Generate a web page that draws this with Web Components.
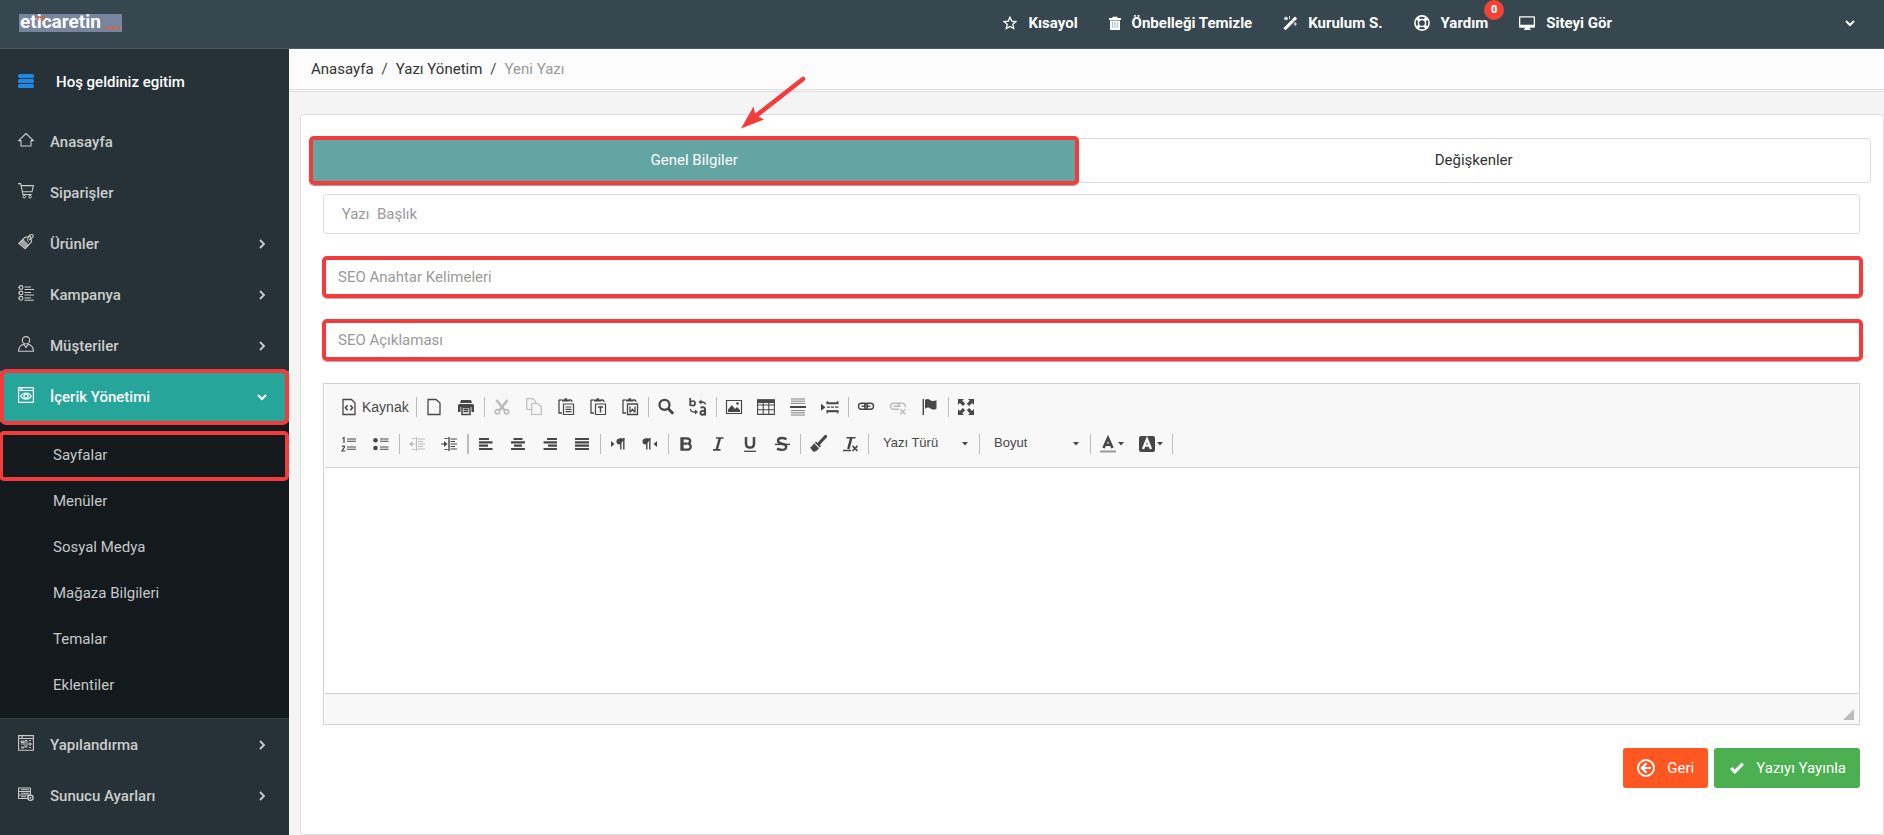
<!DOCTYPE html>
<html lang="tr">
<head>
<meta charset="utf-8">
<title>Yeni Yazı</title>
<style>
  html, body { margin: 0; }
  body {
    font: 15px/24px Roboto, "Open Sans", sans-serif;
    color: #333;
    background: #f4f4f4;
    --mark: #f43b3b;
  }
</style>
</head>
<body>
<admin-shell>
  <top-bar slot="top">
    <top-link icon="star" href="#kisayol">Kısayol</top-link>
    <top-link icon="trash" href="#onbellek">Önbelleği Temizle</top-link>
    <top-link icon="wand" href="#kurulum">Kurulum S.</top-link>
    <top-link icon="ring" href="#yardim" badge="0">Yardım</top-link>
    <top-link icon="screen" href="#site">Siteyi Gör</top-link>
  </top-bar>

  <side-menu slot="side" user="Hoş geldiniz egitim">
    <side-item icon="home">Anasayfa</side-item>
    <side-item icon="cart">Siparişler</side-item>
    <side-item icon="tag" arrow="right">Ürünler</side-item>
    <side-item icon="list" arrow="right">Kampanya</side-item>
    <side-item icon="user" arrow="right">Müşteriler</side-item>
    <side-item icon="eye" arrow="down" active>İçerik Yönetimi</side-item>
    <side-group>
      <sub-item marked>Sayfalar</sub-item>
      <sub-item>Menüler</sub-item>
      <sub-item>Sosyal Medya</sub-item>
      <sub-item>Mağaza Bilgileri</sub-item>
      <sub-item>Temalar</sub-item>
      <sub-item>Eklentiler</sub-item>
    </side-group>
    <side-item icon="config" arrow="right">Yapılandırma</side-item>
    <side-item icon="server" arrow="right">Sunucu Ayarları</side-item>
  </side-menu>

  <crumb-bar></crumb-bar>
  <form-panel>
    <tab-bar slot="tabs"></tab-bar>
    <text-field label=" Yazı  Başlık"></text-field>
    <text-field label="SEO Anahtar Kelimeleri" marked></text-field>
    <text-field label="SEO Açıklaması" marked></text-field>
    <rich-editor></rich-editor>
    <action-button slot="actions" kind="back" icon="back">Geri</action-button>
    <action-button slot="actions" kind="save" icon="check">Yazıyı Yayınla</action-button>
  </form-panel>
</admin-shell>

<script>
const ICONS = {
  star: ['0 0 14 14', '<path d="M7 1.2l1.75 3.9 4.2.45-3.15 2.8.9 4.15L7 10.4l-3.7 2.1.9-4.15L1.05 5.55l4.2-.45z" fill="none" stroke="currentColor" stroke-width="1.3"/>'],
  trash: ['0 0 12 14', '<path d="M0 2h3.5V.8h5V2H12v2H0zM1 4.5h10V14H1z" fill="currentColor"/><path d="M3.7 6v6M6 6v6M8.3 6v6" stroke="#9db8cd" stroke-width="1"/>'],
  wand: ['0 0 14 14', '<path d="M1.5 13.3L13 1.6" stroke="currentColor" stroke-width="3"/><path d="M9.3 4.4l1 1" stroke="#37474f" stroke-width="1"/><path d="M3 .5v4M1 2.5h4M6.5 0v3M12.2 6v4M10.5 8H14M1.5 1l3 3M4.500 1l-3 3" stroke="currentColor" stroke-width=".8"/>'],
  ring: ['0 0 16 16', '<circle cx="8" cy="8" r="7.1" fill="none" stroke="currentColor" stroke-width="1.6"/><circle cx="8" cy="8" r="3.6" fill="none" stroke="currentColor" stroke-width="1.5"/><path d="M2.7 2.7l3 3M13.3 2.7l-3 3M2.7 13.3l3-3M13.3 13.3l-3-3" stroke="currentColor" stroke-width="3.2"/>'],
  screen: ['0 0 16 14', '<path d="M1 .2h14a1 1 0 011 1v9.6a1 1 0 01-1 1h-4.500l.5 1.300h.6V14H5v-.9h.6l.4-1.300H1a1 1 0 01-1-1V1.200a1 1 0 011-1zM1.300 1.500v7.300h13.400V1.500z" fill="currentColor"/>'],
  down: ['0 0 10 10', '<path d="M1 3l4 4 4-4" fill="none" stroke="currentColor" stroke-width="2"/>'],
  right: ['0 0 10 10', '<path d="M3 1l4 4-4 4" fill="none" stroke="currentColor" stroke-width="1.8"/>'],
  menu: ['0 0 16 14', '<rect y="0" width="16" height="4" rx="1.500"/><rect y="5" width="16" height="4" rx="1.500"/><rect y="10" width="16" height="4" rx="1.500"/>'],
  home: ['0 0 16 16', '<path d="M.6 8.600L8 1.500l7.400 7.100H13V14H3V8.600z" fill="none" stroke="currentColor" stroke-width="1.100" stroke-linejoin="round"/>'],
  cart: ['0 0 16 16', '<path d="M0 .6h2.600L5 11.500h8.600M3.200 2.600h12.200l-1.400 6.200H4.500" fill="none" stroke="currentColor" stroke-width="1.100"/><circle cx="6.200" cy="13.700" r="1.300" fill="none" stroke="currentColor"/><circle cx="12" cy="13.700" r="1.300" fill="none" stroke="currentColor"/>'],
  tag: ['0 0 16 16', '<path d="M.8 9.500L7 3.300l5.300-.8 1.300 5.200-6.300 7.100z" fill="none" stroke="currentColor" stroke-width="1.100"/><path d="M2 8.500l5.500 5.600 3-3.300-5.700-5.500zM9 6l2 2" fill="currentColor" stroke="currentColor" opacity=".75"/><path d="M9.200 5.500c1-3.500 3.500-5.500 5.400-4.800 1.800 1.600-1.400 4.200-4 5.300" fill="none" stroke="currentColor" stroke-width="1.100"/>'],
  list: ['0 0 16 16', '<g fill="none" stroke="currentColor" stroke-width="1.100"><circle cx="3" cy="2.500" r="1.900"/><circle cx="3" cy="8" r="1.900"/><circle cx="3" cy="13.300" r="1.900"/><path d="M0 2.500h1.500M0 8h1.500M0 13.300h1.500M6.500 2h6.500M6.500 4.500H16M6.500 7.500H13M6.500 10H16M6.500 13H13M6.500 15.200H16"/></g>'],
  user: ['0 0 16 16', '<circle cx="8" cy="4.300" r="3.700" fill="none" stroke="currentColor" stroke-width="1.100"/><path d="M5.700 8.200C2.500 9.200.6 11.500.6 15.200h14.800c0-3.700-1.900-6-5.100-7l-2.300 3.300z" fill="none" stroke="currentColor" stroke-width="1.100"/>'],
  eye: ['0 0 16 16', '<path d="M.6.600h14.800v14.700H.6zM.6 3.500h14.800M4 1v2M2 2h1" fill="none" stroke="currentColor" stroke-width="1.200"/><path d="M2.700 9.200c2.500-4.300 8.100-4.300 10.600 0-2.500 4-8.100 4-10.600 0z" fill="none" stroke="currentColor" stroke-width="1.100"/><circle cx="8" cy="9.200" r="2" fill="none" stroke="currentColor" stroke-width="1.300"/>'],
  config: ['0 0 16 16', '<path d="M.6.600h14.800v14.700H.6zM.6 3.500h14.800M4 1v2" fill="none" stroke="currentColor" stroke-width="1.100"/><path d="M3 6h3v1.500H3zM3 9h3M3 12h3v1H3M7 5.500h2V12H7zM11 5.500h2M11 8h2v2h-2zM11 12.500h2" fill="none" stroke="currentColor" stroke-width="1"/>'],
  server: ['0 0 16 16', '<path d="M.600 2h11.800v3.500H.600zM.600 5.500h11.800V9H.600zM.600 9H10v3.500H.600zM3 3.800h8M3 7.300h8M3 10.700h5" fill="none" stroke="currentColor" stroke-width="1.100"/><circle cx="12.500" cy="11.700" r="2.600" fill="none" stroke="currentColor" stroke-width="1.300"/><circle cx="12.500" cy="11.700" r=".9" fill="currentColor"/>'],
  back: ['0 0 18 18', '<circle cx="9" cy="9" r="8" fill="none" stroke="currentColor" stroke-width="1.900"/><path d="M9.500 4.300L4.900 9l4.600 4.700M5.300 9H14" fill="none" stroke="currentColor" stroke-width="2.200"/>'],
  check: ['0 0 14 12', '<path d="M1.200 6l3.600 3.900 8-8.200" fill="none" stroke="currentColor" stroke-width="3.200"/>'],

  source: ['0 0 18 18', '<path d="M3 1.500h8.500L15 5v11.500H3z" fill="none" stroke="currentColor" stroke-width="1.300"/><path d="M7.600 7.200L5.500 9.700l2.100 2.500M10.400 7.200l2.100 2.500-2.100 2.500" fill="none" stroke="currentColor" stroke-width="1.600"/>'],
  page: ['0 0 18 18', '<path d="M3 1.500h8L15 5v11.500H3z" fill="none" stroke="currentColor" stroke-width="1.300"/>'],
  print: ['0 0 18 18', '<path d="M4 2h10l1 3H3zM1 7.500Q1 6 2.500 6h13Q17 6 17 7.500V14h-2.500V9h-11v5H1z" fill="currentColor"/><path d="M5 9.500h8v7H5zM6.500 11.500h5M6.500 13.500h5" fill="none" stroke="currentColor" stroke-width="1.500"/>'],
  cut: ['0 0 18 18', '<path d="M3.500 2l7.800 10M14.500 2L6.700 12" stroke="currentColor" stroke-width="2.500"/><circle cx="4.500" cy="13.800" r="2.200" fill="none" stroke="currentColor" stroke-width="1.600"/><circle cx="13.500" cy="13.800" r="2.200" fill="none" stroke="currentColor" stroke-width="1.600"/>'],
  copy: ['0 0 18 18', '<path d="M6 11.500H1.700V.7h6l3 3V5M6.700 5.500h6L16.300 9v7.500H6.700z" fill="none" stroke="currentColor" stroke-width="1.200"/>'],
  paste: ['0 0 18 18', '<path d="M4.500 2H2.700Q2 2 2 3v12h3M12 2h1.500Q15 2 15 4" fill="none" stroke="currentColor" stroke-width="1.300"/><path d="M5 3.500V1.500h2.500V.300h2.500v1.200h2.500v2z" fill="currentColor"/><path d="M6.500 6h10v10.500h-10zM8.500 9h6M8.500 11.300h6M8.500 13.600h6" fill="none" stroke="currentColor" stroke-width="1.200"/>'],
  pastet: ['0 0 18 18', '<path d="M4.500 2H2.700Q2 2 2 3v12h3M12 2h1.500Q15 2 15 4" fill="none" stroke="currentColor" stroke-width="1.300"/><path d="M5 3.500V1.500h2.500V.300h2.500v1.200h2.500v2z" fill="currentColor"/><path d="M6.500 6h10v10.500h-10z" fill="none" stroke="currentColor" stroke-width="1.200"/><path d="M9 9h5M11.500 9v5.500" stroke="currentColor" stroke-width="1.500"/>'],
  pastew: ['0 0 18 18', '<path d="M4.500 2H2.700Q2 2 2 3v12h3M12 2h1.500Q15 2 15 4" fill="none" stroke="currentColor" stroke-width="1.300"/><path d="M5 3.500V1.500h2.500V.300h2.500v1.200h2.500v2z" fill="currentColor"/><path d="M6.500 6h10v10.500h-10zM9 8.500v5.300h.5l2-2.500 2 2.500h.5V8.500" fill="none" stroke="currentColor" stroke-width="1.300"/>'],
  find: ['0 0 18 18', '<circle cx="7.500" cy="6.800" r="5" fill="none" stroke="currentColor" stroke-width="2.300"/><path d="M11.300 10.700l4.900 5" stroke="currentColor" stroke-width="3"/>'],
  replace: ['0 0 18 18', '<path d="M1.200 0v8M1.500 4.500Q2 3 4 3t2 2.300Q6 7.700 4 7.700T1.500 6.500" fill="none" stroke="currentColor" stroke-width="1.700"/><path d="M11.500 9.500Q16 8.500 16 11v6.500M16 12.800q-4.500-.3-4.500 2 0 2 2 2t2.500-2" fill="none" stroke="currentColor" stroke-width="2"/><path d="M16.500 6.500Q16 3.500 11 4M1.500 11q0 3.500 5 3" fill="none" stroke="currentColor" stroke-width="1.400"/><path d="M12.500 1.500v5L9.500 4zM6 11.500v5L9 14z" fill="currentColor"/>'],
  image: ['0 0 18 18', '<path d="M1.500 2.500h15v13h-15z" fill="none" stroke="currentColor" stroke-width="1.200"/><path d="M3 14v-2.500l4-4.500 3 4 2-2 3 3V14z" fill="currentColor"/><circle cx="12.500" cy="5.500" r="1.300" fill="currentColor"/>'],
  table: ['0 0 18 18', '<path d="M.6 2h16.800v14.400H.6zM.6 7h16.800M.6 11.700h16.800M6.200 5v11M11.800 5v11" fill="none" stroke="currentColor" stroke-width="1.100"/><path d="M0 1.300h18V5H0z" fill="currentColor"/>'],
  rule: ['0 0 18 18', '<path d="M2 1h14M2 3.200h14M2 5.400h14M2 12.600h14M2 14.800h14M2 17h14" stroke="currentColor" stroke-width=".9" opacity=".75"/><path d="M1 9h16" stroke="currentColor" stroke-width="2"/>'],
  brk: ['0 0 18 18', '<path d="M6.200 3v2.500h10.600V3M6.200 15.500V13h10.600v2.500" fill="none" stroke="currentColor" stroke-width="1.200"/><path d="M5.600 5.300h11.800M5.600 13.200h11.800" stroke="currentColor" stroke-width="2"/><path d="M6 9.200h3M10 9.200h3M14 9.200h3.500" stroke="currentColor" stroke-width="1.200"/><path d="M0 5.700l4.500 3.500L0 12.700z" fill="currentColor"/>'],
  link: ['0 0 18 18', '<rect x="1.500" y="5.200" width="9" height="6" rx="3" fill="none" stroke="currentColor" stroke-width="1.400"/><rect x="7.500" y="5.200" width="9" height="6" rx="3" fill="none" stroke="currentColor" stroke-width="1.400"/><path d="M4.500 8.200h9" stroke="currentColor" stroke-width="1.300"/>'],
  unlink: ['0 0 18 18', '<path d="M10 11.300H4.500a3 3 0 010-6h3a3 3 0 013 2.500M8.500 5.300h5a3 3 0 012.800 4M4.500 8.300h7" fill="none" stroke="currentColor" stroke-width="1.500"/><path d="M11.300 11.200l5 5M16.300 11.200l-5 5" stroke="currentColor" stroke-width="1.600"/>'],
  flag: ['0 0 18 18', '<path d="M2.300 1v16" stroke="currentColor" stroke-width="1.400"/><path d="M4 1.800q3-1.500 5 .2t6.500.3v8.400q-4 1.800-6-.2t-5.500.2z" fill="currentColor"/>'],
  full: ['0 0 18 18', '<path d="M1 1h6L5.200 2.800l3 3-2.300 2.300-3-3L1 7zM17 1h-6l1.800 1.800-3 3 2.300 2.300 3-3L17 7zM1 17h6l-1.800-1.800 3-3-2.300-2.300-3 3L1 11zM17 17h-6l1.800-1.800-3-3 2.300-2.300 3 3L17 11z" fill="currentColor"/>'],
  ol: ['0 0 18 18', '<path d="M7 4h9M7 6.300h9M7 12h9M7 14.300h9" stroke="currentColor" stroke-width="1.100"/><path d="M2.500 3.500L4 2.500V8M2 11.500q2.500-1.500 2.500.5L2 16h3.500" fill="none" stroke="currentColor" stroke-width="1.200"/>'],
  ul: ['0 0 18 18', '<path d="M8 4h8.500M8 6.300h8.500M8 12h8.500M8 14.300h8.500" stroke="currentColor" stroke-width="1.100"/><circle cx="3.500" cy="5.200" r="2.300" fill="currentColor"/><circle cx="3.500" cy="13" r="2.300" fill="currentColor"/>'],
  outdent: ['0 0 18 18', '<path d="M8.500 2v14" stroke="currentColor" stroke-width="1.300"/><path d="M1.500 9H7M4 3.500h3M4 14.500h3M10 4h7M10 6.500h5M10 9h7M10 11.500h5M10 14h7" stroke="currentColor" stroke-width="1.200"/><path d="M4.500 6L1 9l3.500 3z" fill="currentColor"/>'],
  indent: ['0 0 18 18', '<path d="M9 2v14" stroke="currentColor" stroke-width="1.400"/><path d="M1 9h5M4.500 3.500h3M4.500 14.500h3M10.500 4h6.500M10.500 6.500H15M10.500 9H17M10.500 11.500H15M10.500 14H17" stroke="currentColor" stroke-width="1.200"/><path d="M4 6l3.500 3L4 12z" fill="currentColor"/>'],
  left: ['0 0 18 18', '<path d="M2 4h10M2 7.300h13.500M2 10.700h9M2 14h13.500" stroke="currentColor" stroke-width="2.200"/>'],
  center: ['0 0 18 18', '<path d="M4.500 4h9M2 7.300h14M5 10.700h8M2 14h14" stroke="currentColor" stroke-width="2.200"/>'],
  alignr: ['0 0 18 18', '<path d="M6 4h10M2.500 7.300H16M7 10.700h9M2.500 14H16" stroke="currentColor" stroke-width="2.200"/>'],
  justify: ['0 0 18 18', '<path d="M2 4h14M2 7.300h14M2 10.700h14M2 14h14" stroke="currentColor" stroke-width="2.200"/>'],
  ltr: ['0 0 18 18', '<path d="M2 6v6l3.500-3z" fill="currentColor"/><path d="M16 3.500h-5.500a3 3 0 000 6h.5z" fill="currentColor"/><path d="M11.800 3v11.500M14.800 3v11.500" stroke="currentColor" stroke-width="1.400"/>'],
  rtl: ['0 0 18 18', '<path d="M16 6v6l-3.500-3z" fill="currentColor"/><path d="M10 3.500H4.500a3 3 0 000 6H5z" fill="currentColor"/><path d="M5.800 3v11.500M8.800 3v11.500" stroke="currentColor" stroke-width="1.400"/>'],
  bold: ['0 0 18 18', '<path d="M4.500 3.300h5q3.700 0 3.700 2.800 0 2.300-2.500 2.600 3 .3 3 3 0 3-4 3H4.500z" fill="none" stroke="currentColor" stroke-width="2.300"/><path d="M5 8.700h5.500M5.500 3v12" stroke="currentColor" stroke-width="2.200"/>'],
  italic: ['0 0 18 18', '<path d="M7 3h7.500M4 14.800h7.500" stroke="currentColor" stroke-width="1.700"/><path d="M10.900 3L7.600 15" stroke="currentColor" stroke-width="2.500"/>'],
  under: ['0 0 18 18', '<path d="M5 2v6.500Q5 12.600 9 12.600t4-4.100V2" fill="none" stroke="currentColor" stroke-width="2.500"/><path d="M3 16.300h12" stroke="currentColor" stroke-width="1.300"/>'],
  strike: ['0 0 18 18', '<path d="M13.500 4.300Q11 2.800 8.500 3 5 3.200 5 5.700 5 8 9 8.700t4.200 3q-.2 3.200-4.400 3.200-2.500 0-4.800-1.300" fill="none" stroke="currentColor" stroke-width="2.400"/><path d="M2 9.400h15" stroke="currentColor" stroke-width="1.400"/>'],
  brush: ['0 0 18 18', '<path d="M16.500 1.500L10 8.500" stroke="currentColor" stroke-width="3.200" stroke-linecap="round"/><path d="M7 6.500l5 4.800-1.200 1.200-5-4.800zM5 8.300l5 4.900q-2.500 3.500-5.700 3.500L1 12.500q2.500-1 4-4.200z" fill="currentColor"/>'],
  clear: ['0 0 18 18', '<path d="M5.500 2.800h9M2 15.500h8" stroke="currentColor" stroke-width="1.600"/><path d="M10.200 3L7.400 14" stroke="currentColor" stroke-width="2.600"/><path d="M11.500 10.800l5 5.200M16.500 10.800l-5 5.200" stroke="currentColor" stroke-width="1.700"/>'],
  fg: ['0 0 18 18', '<path d="M4.500 13L9 3l4.500 10M6.300 9.700h5.500" fill="none" stroke="currentColor" stroke-width="2.600"/><path d="M1 16.500h16" stroke="#999" stroke-width="2"/>'],
  bg: ['0 0 18 18', '<rect x="1" y="1" width="16" height="16" rx="2" fill="currentColor"/><path d="M5 14L9 4l4 10M6.300 10.700h5.500" fill="none" stroke="#f8f8f8" stroke-width="2.300"/>'],
  caret: ['0 0 6 4', '<path d="M0 0h6L3 3.500z" fill="currentColor"/>']
};

const icon = (name, w = 18, h = w) =>
  `<svg width="${w}" height="${h}" viewBox="${ICONS[name][0]}" fill="currentColor" aria-hidden="true">${ICONS[name][1]}</svg>`;

const define = (tag, render) => customElements.define(tag, class extends HTMLElement {
  constructor() {
    super();
    this.attachShadow({ mode: 'open' });
  }
  connectedCallback() {
    this.shadowRoot.innerHTML = render(this);
  }
});

define('admin-shell', () => `
<style>
  :host { display: grid; grid-template: auto 1fr / 289px minmax(0, 1fr); min-height: 100vh; }
  ::slotted([slot=top]) { grid-column: 1 / -1; }
  main { display: flex; flex-direction: column; }
</style>
<slot name="top"></slot>
<slot name="side"></slot>
<main><slot></slot></main>`);

define('top-bar', () => `
<style>
  :host { display: block; background: #37474f; border-bottom: 1px solid #4b5b63; color: #fff; }
  header { display: flex; align-items: center; box-sizing: border-box; height: 48px; padding: 0 29px 2px 19px; }
  .logo {
    position: relative; display: flex; align-items: flex-end; box-sizing: border-box;
    width: 103px; height: 18px; padding-left: 1px;
    background: #77869e; color: #fff; text-decoration: none;
    font: bold 19px/20px Roboto, sans-serif;
  }
  .logo small { color: #e0592f; font: 8px/8px Roboto, sans-serif; }
  .logo .my { position: absolute; left: 16px; top: 0; }
  .logo .com { margin-left: auto; padding-right: 1px; }
  nav { display: flex; gap: 31px; margin-left: auto; }
  button { width: 10px; margin-left: 233px; padding: 0; border: 0; background: none; color: inherit; line-height: 0; }
</style>
<header>
  <a class="logo" href="#">eticaretin<small class="my">my</small><small class="com">.com</small></a>
  <nav><slot></slot></nav>
  <button type="button" aria-label="Hesap">${icon('down', 10)}</button>
</header>`);

define('top-link', el => {
  const name = el.getAttribute('icon');
  const w = { star: 14, trash: 12, wand: 14, ring: 16, screen: 16 }[name];
  const h = name === 'ring' ? 16 : 14;
  const badge = el.getAttribute('badge');
  return `
<style>
  :host { display: block; }
  a { position: relative; display: flex; align-items: center; gap: 11px; height: 44px; color: #fff; text-decoration: none; font-weight: 700; white-space: nowrap; }
  b { position: absolute; top: -1px; right: -16px; width: 20px; border-radius: 10px; background: #f44336; font-size: 11px; line-height: 20px; text-align: center; }
</style>
<a href="${el.getAttribute('href')}">${icon(name, w, h)}<span><slot></slot></span>${badge ? `<b>${badge}</b>` : ''}</a>`;
});

define('side-menu', el => `
<style>
  :host { display: block; background: #263238; color: #fff; }
  .user { display: flex; align-items: center; gap: 22px; box-sizing: border-box; height: 67px; padding: 0 0 2px 18px; font-weight: 500; }
  .user svg { color: #1e88e5; margin-bottom: 2px; }
</style>
<div class="user">${icon('menu', 16, 14)}<span>${el.getAttribute('user')}</span></div>
<nav><slot></slot></nav>`);

define('side-item', el => `
<style>
  :host { display: block; }
  a { position: relative; display: flex; align-items: center; gap: 16px; height: 51px; padding: 0 22px 0 18px; color: #ccc; text-decoration: none; font-weight: 500; }
  .main { margin-bottom: 4px; line-height: 0; }
  .arrow { margin-left: auto; line-height: 0; }
  :host([active]) a { background: #26a69a; color: #fff; }
  :host([active]) a::after { content: ""; position: absolute; z-index: 1; inset: -2px 0 -3px; border: 4px solid var(--mark); border-radius: 6px; }
</style>
<a href="#"><span class="main">${icon(el.getAttribute('icon'), 16)}</span><slot></slot>
${el.hasAttribute('arrow') ? `<span class="arrow">${icon(el.getAttribute('arrow'), 10)}</span>` : ''}</a>`);

define('side-group', () => `
<style>
  :host { display: block; padding: 10px 0; background: #13191c; border-bottom: 1px solid #303c42; }
</style><slot></slot>`);

define('sub-item', () => `
<style>
  :host { display: block; }
  a { position: relative; display: flex; align-items: center; height: 46px; padding-left: 53px; color: #c5c7c8; text-decoration: none; }
  :host([marked]) a::after { content: ""; position: absolute; inset: -1px 0 -3px -1px; border: 4px solid var(--mark); border-radius: 5px; }
</style><a href="#"><slot></slot></a>`);

define('crumb-bar', () => `
<style>
  :host { display: block; background: #fcfcfc; border-bottom: 3px double #ddd; }
  ol { display: flex; margin: 0; padding: 8px 22px; list-style: none; }
  li + li::before { content: "/"; padding: 0 8px; color: #444; }
  a { color: #333; text-decoration: none; }
  .here { color: #999; }
</style>
<nav><ol><li><a href="#">Anasayfa</a></li><li><a href="#">Yazı Yönetim</a></li><li class="here">Yeni Yazı</li></ol></nav>`);

define('form-panel', () => `
<style>
  :host { display: flex; flex: 1; padding: 22px 0 0 11px; }
  section { flex: 1; min-width: 0; padding: 23px 12px 46px 10px; border: 1px solid #ddd; border-radius: 4px; background: #fff; }
  .fields { display: flex; flex-direction: column; gap: 23px; padding: 11px 11px 0 12px; }
  .actions { display: flex; justify-content: flex-end; gap: 6px; }
</style>
<section>
  <slot name="tabs"></slot>
  <form class="fields"><slot></slot><div class="actions"><slot name="actions"></slot></div></form>
</section>`);

define('tab-bar', () => `
<style>
  :host { display: block; position: relative; }
  div { display: flex; }
  button { position: relative; box-sizing: border-box; height: 45px; padding: 0 0 2px; border: 1px solid #ddd; background: #fff; color: #333; font: inherit; }
  .on { z-index: 1; flex: 27 0 0; border-color: #5b9c99; background: #62a5a2; color: #fff; border-radius: 4px 0 0 4px; }
  .off { flex: 28 0 0; border-left: 0; border-radius: 0 4px 4px 0; }
  .on::after { content: ""; position: absolute; inset: -3px; border: 4px solid var(--mark); border-radius: 5px; box-shadow: 0 1px 1px #0006; }
  svg { position: absolute; left: 428px; top: -62px; z-index: 2; }
</style>
<div role="tablist">
  <button type="button" role="tab" aria-selected="true" class="on">Genel Bilgiler</button>
  <button type="button" role="tab" aria-selected="false" class="off">Değişkenler</button>
</div>
<svg width="70" height="56" viewBox="0 0 70 56" aria-hidden="true" fill="#f43b3b">
  <path d="M64 3L18 39" stroke="#f43b3b" stroke-width="4.500" stroke-linecap="round"/>
  <path d="M2 52.500L14.500 30.500l2 8.500L25 43.500z"/>
</svg>`);

define('text-field', el => `
<style>
  :host { display: block; position: relative; }
  input { box-sizing: border-box; display: block; width: 100%; height: 40px; padding: 0 14px 1px; border: 1px solid #ddd; border-radius: 3px; background: #fff; color: #333; font: inherit; }
  input::placeholder { color: #999; opacity: 1; }
  :host([marked])::after { content: ""; position: absolute; inset: -1px -3px -1px -1px; border: 4px solid var(--mark); border-radius: 5px; box-shadow: 0 1px 1px #0005; pointer-events: none; }
</style>
<input type="text" aria-label="${el.getAttribute('label').trim()}" placeholder="${el.getAttribute('label')}">`);

define('tool-button', el => `
<style>
  :host { display: block; }
  button { display: flex; align-items: center; justify-content: center; min-width: 32px; height: 37px; padding: 0 7px; border: 0; background: none; color: #474747; font: 14px/18px "Liberation Sans", Arial, sans-serif; }
  :host([wide]) button { gap: 4px; padding-right: 5px; }
  :host([menu]) button { gap: 1px; width: 39px; }
  button:disabled { color: #bcbcbc; }
</style>
<button type="button" aria-label="${el.getAttribute('label') || el.getAttribute('icon')}" ${el.hasAttribute('off') ? 'disabled' : ''}>${icon(el.getAttribute('icon'))}<slot></slot>${el.hasAttribute('menu') ? icon('caret', 6, 4) : ''}</button>`);

define('tool-select', el => `
<style>
  :host { display: flex; align-items: center; width: 107px; }
  select { flex: 1; min-width: 0; height: 30px; padding: 0 0 2px 13px; border: 0; background: none; appearance: none; color: #474747; font: 13px/18px "Liberation Sans", Arial, sans-serif; }
  svg { margin-right: 9px; color: #474747; }
</style>
<select aria-label="${el.getAttribute('label')}"><option>${el.getAttribute('label')}</option></select>${icon('caret', 6, 4)}`);

const tools = list => list.split(' ').map(t => {
  if (t === '|') return '<i></i>';
  if (t === '||') return '<i class="thick"></i>';
  const off = t.startsWith('-');
  return `<tool-button icon="${off ? t.slice(1) : t}"${off ? ' off' : ''}></tool-button>`;
}).join('');

define('rich-editor', () => `
<style>
  :host { display: block; border: 1px solid #d1d1d1; padding: 0 1px; background: #fff; }
  .tools { padding: 4px 8px 5px; background: #f8f8f8; border-bottom: 1px solid #d1d1d1; }
  .row { display: flex; align-items: center; height: 37px; }
  i { width: 1px; height: 20px; margin: 0 1px 0 2px; background: #bcbcbc; }
  .thick { width: 2px; }
  .area { display: block; box-sizing: border-box; width: 100%; height: 225px; padding: 20px; border: 0; resize: none; outline: 0; font: inherit; }
  footer { display: flex; justify-content: flex-end; align-items: center; height: 30px; padding-right: 4px; border-top: 1px solid #d1d1d1; background: #f8f8f8; }
  footer svg { margin-bottom: -10px; }
</style>
<div class="tools" role="toolbar" aria-label="Düzenleyici">
  <div class="row"><tool-button icon="source" label="Kaynak" wide>Kaynak</tool-button>${tools('| page print | -cut -copy paste pastet pastew | find replace | image table rule brk | link -unlink flag | full')}</div>
  <div class="row">${tools('ol ul | -outdent indent || left center alignr justify | ltr rtl | bold italic under strike | brush clear |')}<tool-select label="Yazı Türü"></tool-select><i></i><tool-select label="Boyut"></tool-select><i></i><tool-button icon="fg" menu></tool-button><tool-button icon="bg" menu></tool-button><i></i></div>
</div>
<textarea class="area" aria-label="İçerik"></textarea>
<footer><svg width="11" height="11" viewBox="0 0 11 11" aria-hidden="true"><path d="M11 0v11H0z" fill="#bcbcbc"/></svg></footer>`);

define('action-button', el => `
<style>
  :host { display: block; }
  button { display: flex; align-items: center; height: 40px; gap: 12px; padding: 0 14px 1px; border: 0; border-radius: 3px; color: #fff; font: inherit; white-space: nowrap; }
  :host([kind=back]) button { background: #ff5722; }
  :host([kind=save]) button { background: #4caf50; padding-left: 16px; }
</style>
<button type="button">${el.getAttribute('icon') === 'back' ? icon('back', 18) : icon('check', 14, 12)}<slot></slot></button>`);
</script>
</body>
</html>
